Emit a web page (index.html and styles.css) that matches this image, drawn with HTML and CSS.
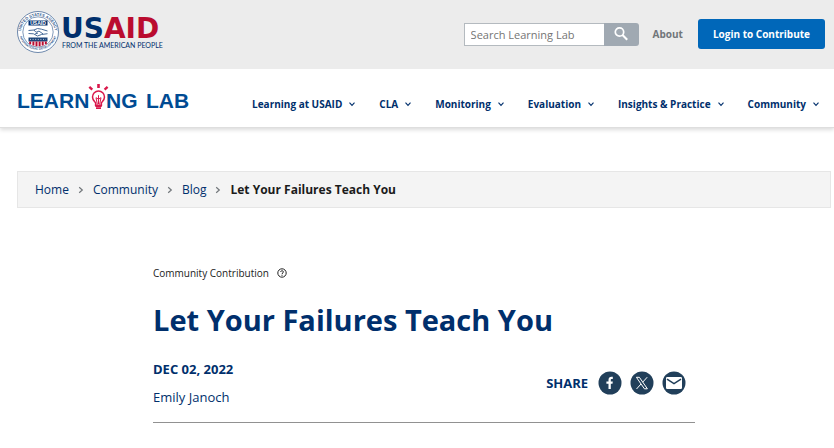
FILE: index.html
```html
<!DOCTYPE html>
<html lang="en">
<head>
<meta charset="utf-8">
<meta name="viewport" content="width=device-width, initial-scale=1">
<title>Let Your Failures Teach You</title>
<link rel="stylesheet" href="styles.css">
</head>
<body>
<svg class="sprite" aria-hidden="true">
  <symbol id="chevron" viewBox="0 0 8 6"><path d="M1.5 1.7 4 4.4 6.5 1.7" fill="none" stroke="currentColor" stroke-width="1.1"/></symbol>
  <symbol id="crumb" viewBox="0 0 6 8"><path d="M1.2 1.2 4.3 4 1.2 6.8" fill="none" stroke="currentColor" stroke-width="1.2"/></symbol>
</svg>
<header class="site-header">
  <div class="top-bar">
    <a class="usaid-logo" href="#" aria-label="USAID home">
      <svg width="148" height="44" viewBox="0 0 148 44">
        <defs>
          <path id="ring-top" d="M3.9 25A17.2 17.2 0 1 1 38.1 25"/>
          <path id="ring-bottom" d="M2.1 24A19.2 19.2 0 0 0 39.9 24"/>
        </defs>
        <circle cx="21" cy="22" r="20.5" fill="#fff" stroke="#5d7ca4" stroke-width=".9"/>
        <circle cx="21" cy="22" r="15.2" fill="#fff" stroke="#6482a8" stroke-width=".8"/>
        <text class="seal-ring"><textPath href="#ring-top" startOffset="50%" text-anchor="middle">UNITED STATES AGENCY</textPath></text>
        <text class="seal-ring seal-ring-small"><textPath href="#ring-bottom" startOffset="50%" text-anchor="middle">INTERNATIONAL DEVELOPMENT</textPath></text>
        <path d="M11.5 10.5h19v5h-19z" fill="#002f6c"/>
        <text class="seal-name" x="21" y="14.9" text-anchor="middle">USAID</text>
        <path d="M11.5 20.5 17 20l3.5-1.5 4 .7 6 1.8M11.5 23.5l5 .3 4 2.2 4-1.5 6-.8M17 20l2 2.3 3-1.2 4 2.8M18 24l3-1" fill="none" stroke="#486b98" stroke-width="1"/>
        <path d="M11.5 27.5h19v4h-19z" fill="#1c4479"/>
        <path d="M13 29.4h16" stroke="#fff" stroke-width=".7" stroke-dasharray="1 1.6"/>
        <path d="M12.2 31.5h2v2.7h-2zM15.4 31.5h2v4h-2zM18.5 31.5h2v4.8h-2zM21.6 31.5h2v4.8h-2zM24.7 31.5h2v4h-2zM27.8 31.5h2v2.7h-2z" fill="#ba0c2f"/>
        <text class="word" x="44" y="28"><tspan fill="#002f6c">US</tspan><tspan fill="#ba0c2f">AID</tspan></text>
        <text class="tagline" x="45" y="38">FROM THE AMERICAN PEOPLE</text>
      </svg>
    </a>
    <div class="top-tools">
      <form class="search" role="search">
        <input type="search" aria-label="Search Learning Lab" placeholder="Search Learning Lab">
        <button type="button" aria-label="Search">
          <svg width="16" height="16" viewBox="0 0 16 16"><circle cx="6.5" cy="6" r="4.2" fill="none" stroke="#fff" stroke-width="1.7"/><path d="m9.5 9 4.7 4.7" stroke="#fff" stroke-width="2.1"/></svg>
        </button>
      </form>
      <a class="about" href="#">About</a>
      <a class="login" href="#">Login to Contribute</a>
    </div>
  </div>
  <div class="nav-bar">
    <a class="lab-logo" href="#" aria-label="Learning Lab home">
      <svg width="174" height="28" viewBox="0 0 174 28">
        <g class="lab-word"><text x="0" y="24">LEARN</text><text x="89" y="24">NG</text><text x="129" y="24">LAB</text></g>
        <g fill="none" stroke="#d9184b">
          <path d="M78.6 21.2v-2.4C77.2 17 75.5 15.8 75.5 13a6 6 0 0 1 12 0c0 2.8-1.7 4-3.1 5.8v2.4z" stroke-width="1.5" fill="#fff"/>
          <path d="M80.4 20.5 79 13.7l2.5 1.5 2.5-1.5-1.4 6.8M81.5 11.2V20" stroke-width="1"/>
          <path d="M78.3 22h6.4M79 24.2h5" stroke-width="1.8"/>
          <path d="M81.5 0v4" stroke-width="2.6"/>
          <path d="m72.3 2.8 3 2.9M90.6 2.8l-3 2.9" stroke-width="2.3"/>
        </g>
      </svg>
    </a>
    <nav class="main-nav" aria-label="Main">
      <a href="#">Learning at USAID <svg><use href="#chevron"/></svg></a>
      <a href="#">CLA <svg><use href="#chevron"/></svg></a>
      <a href="#">Monitoring <svg><use href="#chevron"/></svg></a>
      <a href="#">Evaluation <svg><use href="#chevron"/></svg></a>
      <a href="#">Insights &amp; Practice <svg><use href="#chevron"/></svg></a>
      <a href="#">Community <svg><use href="#chevron"/></svg></a>
    </nav>
  </div>
</header>
<nav class="breadcrumb" aria-label="Breadcrumb">
  <a href="#">Home</a><svg><use href="#crumb"/></svg>
  <a href="#">Community</a><svg><use href="#crumb"/></svg>
  <a href="#">Blog</a><svg><use href="#crumb"/></svg>
  <span class="current">Let Your Failures Teach You</span>
</nav>
<main class="article">
  <p class="kind">Community Contribution
    <svg width="10" height="10" viewBox="0 0 10 10"><circle cx="5" cy="5" r="4.2" fill="none" stroke="#222" stroke-width="1"/><path d="M3.6 4C3.7 2.3 6.5 2.4 6.4 4 6.3 4.9 5 5 5 6.1M5 6.8v1" fill="none" stroke="#222" stroke-width="1"/></svg>
  </p>
  <h1>Let Your Failures Teach You</h1>
  <div class="meta">
    <div>
      <p class="date">DEC 02, 2022</p>
      <p class="author">Emily Janoch</p>
    </div>
    <div class="share">
      <span>SHARE</span>
      <a href="#" aria-label="Share on Facebook"><svg width="24" height="24" viewBox="0 0 24 24"><circle cx="12" cy="12" r="11.5" fill="#213f5a"/><path d="M10.5 18v-5.2H8.4v-2.4h2.1V8.7c0-2 1.2-3 3-3h1.3v2.2h-1c-.8 0-1 .4-1 1v1.5h2l-.3 2.4h-1.7V18z" fill="#fff"/></svg></a>
      <a href="#" aria-label="Share on X"><svg width="24" height="24" viewBox="0 0 24 24"><circle cx="12" cy="12" r="11.5" fill="#213f5a"/><path d="M6.4 6.3h3l8 11.5h-3zM17.2 6.2l-4.5 5M11 13l-4.5 5" fill="none" stroke="#fff" stroke-width="1"/></svg></a>
      <a href="#" aria-label="Share by email"><svg width="24" height="24" viewBox="0 0 24 24"><circle cx="12" cy="12" r="11.5" fill="#213f5a"/><rect x="4" y="6" width="16" height="12" rx="1.2" fill="#fff"/><path d="m5 8.2 7 4.4 7-4.4" fill="none" stroke="#213f5a" stroke-width="1.5"/></svg></a>
    </div>
  </div>
</main>
</body>
</html>
```
FILE: styles.css
```css
* { box-sizing: border-box; }
body {
  margin: 0;
  background: #fff;
  color: #002f6c;
  font-family: "Open Sans", "Noto Sans", sans-serif;
}
a { color: inherit; text-decoration: none; }
p, h1 { margin: 0; }
svg { display: block; flex: none; overflow: visible; }
.sprite { position: absolute; width: 0; height: 0; }

.site-header { border-bottom: 1px solid #dedede; box-shadow: 0 2px 4px rgba(0, 0, 0, .14); }
.top-bar {
  display: flex;
  justify-content: space-between;
  align-items: flex-start;
  min-height: 69px;
  padding: 10px 9px 0 17px;
  background: #ececec;
}
.top-tools { display: flex; align-items: center; padding-top: 9px; }
.search { display: flex; height: 23px; }
.search input {
  width: 140px;
  padding: 0 6px;
  border: 1px solid #b4babf;
  border-right: 0;
  border-radius: 0;
  outline: 0;
  background: #fff;
  font: 11px "Open Sans", sans-serif;
}
.search input::placeholder { color: #757575; }
.search button {
  display: flex;
  justify-content: center;
  align-items: center;
  width: 35px;
  padding: 0;
  border: 0;
  border-radius: 0 3px 3px 0;
  background: #a0a9b2;
}
.about { margin: 0 15px 0 14px; color: #71767a; font-size: 10px; font-weight: 700; }
.login {
  padding: 0 15px;
  border-radius: 3px;
  background: #0067b9;
  color: #fff;
  font-size: 10px;
  font-weight: 700;
  line-height: 30px;
}
.seal-ring { fill: #33598c; font: 700 4px "Liberation Sans", sans-serif; }
.seal-ring-small { font-size: 3px; }
.seal-name { fill: #fff; font: 700 5px "Liberation Sans", sans-serif; }
.word { font: 700 28px "DejaVu Sans", sans-serif; }
.tagline { fill: #002f6c; font: 400 7px Lato, sans-serif; }

.nav-bar {
  display: flex;
  justify-content: space-between;
  align-items: center;
  min-height: 58px;
  padding: 0 14px 0 17px;
}
.lab-word { fill: #004b93; font: 700 21px "Liberation Sans", sans-serif; }
.main-nav { display: flex; gap: 23px; padding-top: 12px; }
.main-nav a {
  display: flex;
  align-items: center;
  gap: 6px;
  font-size: 10px;
  font-weight: 700;
  line-height: 16px;
}
.main-nav svg { width: 8px; height: 6px; }

.breadcrumb {
  display: flex;
  align-items: center;
  gap: 9px;
  min-height: 37px;
  margin: 43px 3px 0 17px;
  padding: 0 17px;
  border: 1px solid #e6e6e6;
  background: #f4f4f4;
  font-size: 12px;
}
.breadcrumb svg { width: 6px; height: 8px; color: #71767a; }
.current { color: #1b1b1b; font-weight: 700; }

.article { width: 65%; margin: 57px auto 0 153px; }
.kind {
  display: flex;
  align-items: center;
  gap: 8px;
  color: #1b1b1b;
  font-size: 10px;
  line-height: 16px;
}
h1 { margin-top: 18px; font-size: 29px; font-weight: 700; line-height: 42px; }
.meta {
  display: flex;
  justify-content: space-between;
  align-items: center;
  margin-top: 18px;
  padding-bottom: 15px;
  border-bottom: 1px solid #919191;
}
.date { font-size: 13px; font-weight: 700; line-height: 20px; }
.author { margin-top: 8px; font-size: 13px; line-height: 20px; }
.share { display: flex; align-items: center; gap: 8px; padding-right: 9px; font-size: 13px; font-weight: 700; }
.share span { margin-right: 2px; }
```
